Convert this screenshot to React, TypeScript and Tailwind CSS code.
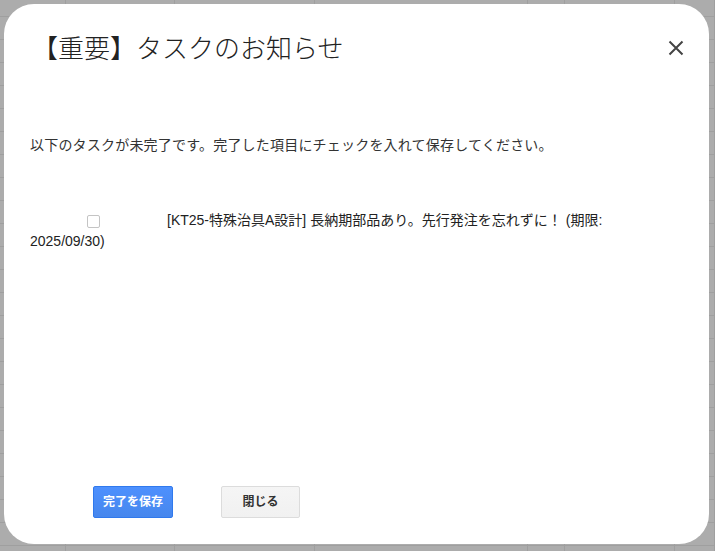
import React from 'react'

const columns = [66, 109, 140, 213, 37, 110, 40]

function SheetBackdrop() {
  return (
    <div className="flex h-[551px] w-[715px] bg-[#acacac] bg-[linear-gradient(to_bottom,#9f9f9f_1px,transparent_1px)] bg-[length:100%_23px] bg-[position:0_16px]">
      {columns.map((w, i) => (
        <div
          key={i}
          className="h-full shrink-0 border-r border-[#9f9f9f]"
          style={{ width: w }}
        />
      ))}
    </div>
  )
}

function CloseIcon() {
  return (
    <svg width="16" height="16" viewBox="0 0 16 16" className="block">
      <path d="M1.5 1.5 L14.5 14.5 M14.5 1.5 L1.5 14.5" stroke="#444" strokeWidth="2" fill="none" />
    </svg>
  )
}

export default function App() {
  return (
    <div className="relative h-[551px] w-[715px] overflow-hidden font-['Liberation_Sans','Noto_Sans_CJK_JP',sans-serif]">
      <SheetBackdrop />

      <div className="absolute left-[4px] top-[4px] flex h-[540px] w-[705px] flex-col rounded-[30px] bg-white px-[26px] pb-[26px] pt-[27px]">
        <div className="flex h-[32px] items-center justify-between">
          <h2 className="ml-[2px] text-[26px] leading-[32px] font-light text-[#222] font-['Noto_Sans_CJK_JP',sans-serif]">
            【重要】タスクのお知らせ
          </h2>
          <button className="mr-[-1px] mt-[2px]">
            <CloseIcon />
          </button>
        </div>

        <p className="mt-[72px] text-[14px] leading-[20px] tracking-[0.2px] text-[#333]">
          以下のタスクが未完了です。完了した項目にチェックを入れて保存してください。
        </p>

        <div className="mr-[8px] mt-[55px] text-[14px] leading-[21px] text-[#222]">
          <span className="inline-block w-[137px] pr-[10px] text-center align-middle leading-[13px]">
            <input
              type="checkbox"
              className="m-0 inline-block h-[13px] w-[13px] appearance-none rounded-[2px] border border-[#c4c4c4] bg-white align-top"
            />
          </span>
          [KT25-特殊治具A設計] 長納期部品あり。先行発注を忘れずに！ (期限: 2025/09/30)
        </div>

        <div className="mt-auto ml-[63px] flex gap-[48px]">
          <button className="h-[32px] w-[80px] rounded-[2px] border border-[#3079ed] bg-[linear-gradient(to_bottom,#4d90fe,#4787ed)] text-[12px] font-bold text-white">
            完了を保存
          </button>
          <button className="h-[32px] w-[79px] rounded-[2px] border border-[#dcdcdc] bg-[linear-gradient(to_bottom,#f5f5f5,#f1f1f1)] text-[12px] font-bold text-[#333]">
            閉じる
          </button>
        </div>
      </div>
    </div>
  )
}
